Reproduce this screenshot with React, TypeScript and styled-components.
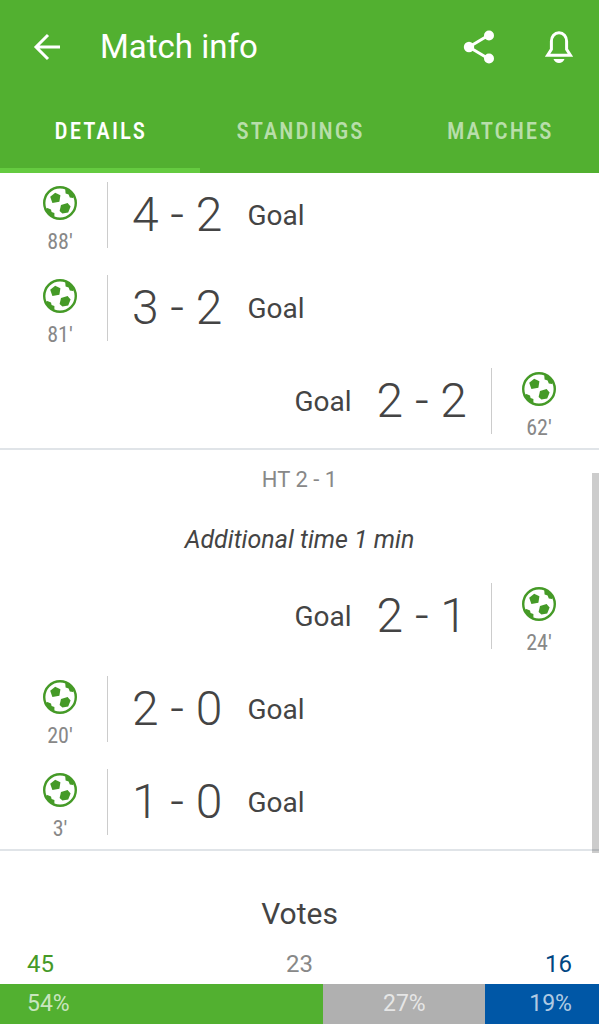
import React from 'react';
import styled, { createGlobalStyle } from 'styled-components';

const GlobalStyle = createGlobalStyle`
  * { box-sizing: border-box; }
  html { scrollbar-width: none; }
  body {
    margin: 0;
    background: #fff;
    color: #444;
    font-family: Roboto, "Noto Sans", sans-serif;
  }
  button { border: 0; padding: 0; background: none; color: inherit; font: inherit; }
  svg { display: block; flex: none; }
`;

const Page = styled.div`
  position: relative;
  display: flex;
  flex-direction: column;
`;

const Header = styled.header`
  background: #52b030;
  color: #fff;
`;

const AppBar = styled.div`
  display: flex;
  align-items: center;
  height: 93px;
  padding: 0 22px 0 28px;
`;

const IconButton = styled.button`
  display: grid;
  place-items: center;
  width: 36px;
  height: 40px;
`;

const Title = styled.h1`
  flex: 1;
  margin: 0 0 0 36px;
  font-size: 33px;
  line-height: 40px;
  font-weight: 400;
`;

const Actions = styled.div`
  display: flex;
  gap: 44px;
`;

const Tabs = styled.nav`
  display: grid;
  grid-template-columns: repeat(3, 1fr);
  height: 80px;
`;

const Tab = styled.button<{ $active?: boolean }>`
  padding: 3px 0 0 2px;
  border-bottom: 5px solid ${(p) => (p.$active ? '#65cb40' : 'transparent')};
  color: ${(p) => (p.$active ? '#fff' : 'rgba(255, 255, 255, 0.6)')};
  font-family: "Roboto Condensed", Roboto, sans-serif;
  font-size: 23px;
  line-height: 28px;
  font-weight: 500;
  letter-spacing: 2px;
`;

const Half = styled.section<{ $first?: boolean }>`
  display: flex;
  flex-direction: column;
  padding: ${(p) => (p.$first ? '9px' : '16px')} 0 14px;
  border-bottom: 2px solid #e0e4e8;
`;

const Events = styled.ul`
  display: flex;
  flex-direction: column;
  gap: 27px;
  margin: 0;
  padding: 0;
  list-style: none;
`;

const EventRow = styled.li<{ $away?: boolean }>`
  display: flex;
  flex-direction: ${(p) => (p.$away ? 'row-reverse' : 'row')};
  align-items: center;
  height: 66px;
  padding: 0 13px;
`;

const Moment = styled.div`
  display: flex;
  flex-direction: column;
  align-items: center;
  gap: 8px;
  width: 94px;
  height: 66px;
  padding-top: 4px;
`;

const Minute = styled.span`
  color: #888;
  font-family: "Roboto Condensed", Roboto, sans-serif;
  font-size: 22px;
  line-height: 28px;
`;

const Play = styled.div<{ $away?: boolean }>`
  display: flex;
  flex-direction: ${(p) => (p.$away ? 'row-reverse' : 'row')};
  align-items: center;
  gap: 25px;
  height: 66px;
  padding: 0 24px;
  border: solid #ccc;
  border-width: ${(p) => (p.$away ? '0 1px 0 0' : '0 0 0 1px')};
`;

const Score = styled.span`
  font-size: 48px;
  line-height: 66px;
  font-weight: 300;
  white-space: nowrap;
`;

const Label = styled.span`
  padding-top: 2px;
  font-size: 28px;
  line-height: 34px;
`;

const HalfTime = styled.h2`
  margin: 0;
  color: #888;
  font-size: 22px;
  line-height: 28px;
  font-weight: 400;
  text-align: center;
`;

const Note = styled.p`
  margin: 29px 0 26px;
  font-size: 25px;
  line-height: 34px;
  font-style: italic;
  text-align: center;
`;

const Votes = styled.section`
  display: flex;
  flex-direction: column;
`;

const VotesTitle = styled.h2`
  margin: 46px 0 16px;
  font-size: 30px;
  line-height: 34px;
  font-weight: 400;
  text-align: center;
`;

const Counts = styled.div`
  display: flex;
  justify-content: space-between;
  height: 37px;
  padding: 0 27px;
  font-size: 24px;
  line-height: 34px;
`;

const Count = styled.span<{ $color: string }>`
  color: ${(p) => p.$color};
`;

const Bar = styled.div`
  display: flex;
  height: 40px;
`;

const Share = styled.div<{ $percent: number; $color: string; $align: string }>`
  width: ${(p) => p.$percent}%;
  padding: 0 27px;
  background: ${(p) => p.$color};
  color: rgba(255, 255, 255, 0.7);
  font-size: 23px;
  line-height: 40px;
  text-align: ${(p) => p.$align};
`;

const ScrollThumb = styled.div`
  position: absolute;
  top: 473px;
  right: 0;
  width: 7px;
  height: 380px;
  background: rgba(0, 0, 0, 0.2);
`;

const BackIcon = () => (
  <svg width="28" height="28" viewBox="0 0 28 28" fill="none" stroke="#fff" strokeWidth="3" aria-hidden="true">
    <path d="M28 14H4M16 2L4 14L16 26" />
  </svg>
);

const ShareIcon = () => (
  <svg width="32" height="36" viewBox="0 0 32 36" fill="#fff" aria-hidden="true">
    <path d="M26 6L6 18L26 30" fill="none" stroke="#fff" strokeWidth="3" />
    <circle cx="26" cy="6.5" r="5" />
    <circle cx="6" cy="18" r="5.2" />
    <circle cx="26" cy="29.5" r="5" />
  </svg>
);

const BellIcon = () => (
  <svg width="28" height="32" viewBox="0 0 28 32" aria-hidden="true">
    <path
      d="M2.6 24.2L6.4 18.2V10.2C6.4 5.5 9.5 1.7 14 1.7S21.6 5.5 21.6 10.2V18.2L25.4 24.2Z"
      fill="none"
      stroke="#fff"
      strokeWidth="3"
    />
    <path d="M8.5 28H19.5C18.5 30.5 16.5 32 14 32S9.5 30.5 8.5 28Z" fill="#fff" />
  </svg>
);

const BallIcon = () => (
  <svg width="34" height="34" viewBox="0 0 34 34" fill="#459a27" role="img" aria-label="Goal">
    <circle cx="17" cy="17" r="15.8" fill="none" stroke="#459a27" strokeWidth="2.4" />
    <path d="M7.2 10.8L12.2 6.8L17.4 9.2L16.4 15.8L9.4 17Z" />
    <path d="M18 19L24.6 17L27.6 20.4L25.2 26.6L19.4 27.4L16.6 25Z" />
    <path d="M22.2 3L22.6 7.6L25.6 8.6L26.8 11.6L30 12L31.4 10.2C29.8 6.8 27 4 23.6 2.2Z" />
    <path d="M2.2 23L4.4 22L8 23.4L8.6 26L11.4 27L11.4 31.8C7.4 30.2 4 27.2 2.2 23Z" />
  </svg>
);

type GoalEvent = { minute: string; score: string; away?: boolean };

const secondHalf: GoalEvent[] = [
  { minute: "88'", score: '4 - 2' },
  { minute: "81'", score: '3 - 2' },
  { minute: "62'", score: '2 - 2', away: true },
];

const firstHalf: GoalEvent[] = [
  { minute: "24'", score: '2 - 1', away: true },
  { minute: "20'", score: '2 - 0' },
  { minute: "3'", score: '1 - 0' },
];

const EventList = ({ events }: { events: GoalEvent[] }) => (
  <Events>
    {events.map((event) => (
      <EventRow key={event.minute} $away={event.away}>
        <Moment>
          <BallIcon />
          <Minute>{event.minute}</Minute>
        </Moment>
        <Play $away={event.away}>
          <Score>{event.score}</Score>
          <Label>Goal</Label>
        </Play>
      </EventRow>
    ))}
  </Events>
);

export default function App() {
  return (
    <Page>
      <GlobalStyle />
      <Header>
        <AppBar>
          <IconButton aria-label="Back"><BackIcon /></IconButton>
          <Title>Match info</Title>
          <Actions>
            <IconButton aria-label="Share"><ShareIcon /></IconButton>
            <IconButton aria-label="Notifications"><BellIcon /></IconButton>
          </Actions>
        </AppBar>
        <Tabs>
          <Tab $active>DETAILS</Tab>
          <Tab>STANDINGS</Tab>
          <Tab>MATCHES</Tab>
        </Tabs>
      </Header>
      <main>
        <Half $first>
          <EventList events={secondHalf} />
        </Half>
        <Half>
          <HalfTime>HT 2 - 1</HalfTime>
          <Note>Additional time 1 min</Note>
          <EventList events={firstHalf} />
        </Half>
        <Votes>
          <VotesTitle>Votes</VotesTitle>
          <Counts>
            <Count $color="#459a27">45</Count>
            <Count $color="#888">23</Count>
            <Count $color="#004682">16</Count>
          </Counts>
          <Bar>
            <Share $percent={54} $color="#52b030" $align="left">54%</Share>
            <Share $percent={27} $color="#b0b0b0" $align="center">27%</Share>
            <Share $percent={19} $color="#0057a6" $align="right">19%</Share>
          </Bar>
        </Votes>
      </main>
      <ScrollThumb />
    </Page>
  );
}
